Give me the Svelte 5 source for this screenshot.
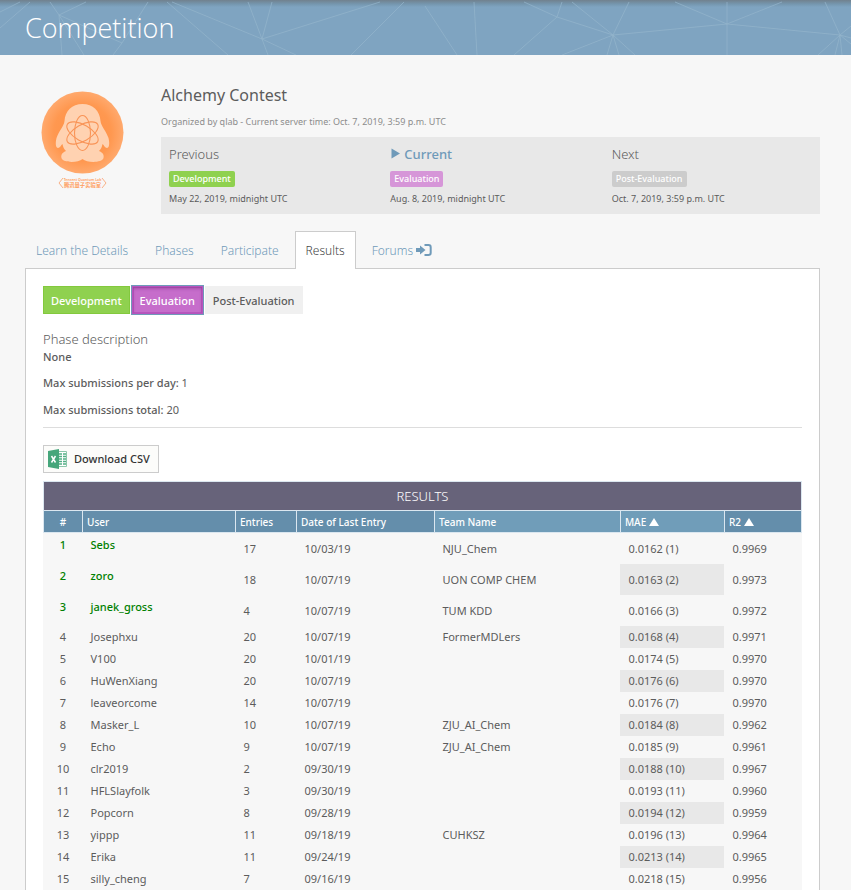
<script>
  const phases = [
    { heading: 'Previous', name: 'Development', date: 'May 22, 2019, midnight UTC', kind: 'dev' },
    { heading: 'Current', name: 'Evaluation', date: 'Aug. 8, 2019, midnight UTC', kind: 'eval' },
    { heading: 'Next', name: 'Post-Evaluation', date: 'Oct. 7, 2019, 3:59 p.m. UTC', kind: 'post' },
  ];
  const tabs = ['Learn the Details', 'Phases', 'Participate', 'Results', 'Forums'];
  const rows = [
    ['Sebs', 17, '10/03/19', 'NJU_Chem', '0.0162', '0.9969'],
    ['zoro', 18, '10/07/19', 'UON COMP CHEM', '0.0163', '0.9973'],
    ['janek_gross', 4, '10/07/19', 'TUM KDD', '0.0166', '0.9972'],
    ['Josephxu', 20, '10/07/19', 'FormerMDLers', '0.0168', '0.9971'],
    ['V100', 20, '10/01/19', '', '0.0174', '0.9970'],
    ['HuWenXiang', 20, '10/07/19', '', '0.0176', '0.9970'],
    ['leaveorcome', 14, '10/07/19', '', '0.0176', '0.9970'],
    ['Masker_L', 10, '10/07/19', 'ZJU_AI_Chem', '0.0184', '0.9962'],
    ['Echo', 9, '10/07/19', 'ZJU_AI_Chem', '0.0185', '0.9961'],
    ['clr2019', 2, '09/30/19', '', '0.0188', '0.9967'],
    ['HFLSlayfolk', 3, '09/30/19', '', '0.0193', '0.9960'],
    ['Popcorn', 8, '09/28/19', '', '0.0194', '0.9959'],
    ['yippp', 11, '09/18/19', 'CUHKSZ', '0.0196', '0.9964'],
    ['Erika', 11, '09/24/19', '', '0.0213', '0.9965'],
    ['silly_cheng', 7, '09/16/19', '', '0.0218', '0.9956'],
  ];
</script>

<header class="banner">
  <svg class="mesh" width="851" height="55" viewBox="0 0 851 55" aria-hidden="true">
    <path d="M0 12L20 2M0 28L30 2M50 2L59 15L86 2M59 15L62 55M59 15L84 55M59 15L122 43L148 2M122 43L113 55M167 2L228 55M172 2L262 39L248 2M262 39L272 2M262 39L380 2M262 39L268 55M262 39L296 55M404 2L351 55M425 6L457 55M474 2L477 55M514 55L557 17L562 2M557 17L524 2M557 17L613 35L572 2M613 35L629 2M613 35L562 55M613 35L607 55M613 35L619 55M613 35L635 55M613 35L727 24L675 2M727 24L727 2M727 24L782 2M727 24V55M727 24L840 35L825 2M840 35L851 26M840 35L818 55M840 35L835 55M840 35L842 55M840 35L851 44M840 35L851 38" />
  </svg>
  <h1>Competition</h1>
</header>

<main>
  <section class="contest">
    <svg class="logo" width="84" height="98" viewBox="11 11 84 98" role="img" aria-label="Tencent Quantum Lab">
      <defs>
        <radialGradient id="disc">
          <stop offset="0" stop-color="#ff8f45" />
          <stop offset="0.7" stop-color="#ff9850" />
          <stop offset="1" stop-color="#ffa96d" />
        </radialGradient>
      </defs>
      <circle cx="52.500" cy="52.500" r="41" fill="url(#disc)" />
      <path fill="#ffd2b1" d="M52.500 24C42 24 35 31 34.500 41C34 46 29 51 26.500 58C25 64 26 68 28 68C30 68 31 65 32.500 64C33 67 34 69 36 71C31 73 31 76 31.500 78C33 83 48 83 52.500 79C57 83 72 83 73.500 78C74 76 74 73 69 71C71 69 72 67 72.500 64C74 65 75 68 77 68C79 68 80 64 78.500 58C76 51 71 46 70.500 41C70 31 63 24 52.500 24Z" />
      <g fill="none" stroke="#f99457" stroke-width="1.100">
        <ellipse cx="52.500" cy="53" rx="8" ry="17.500" />
        <ellipse cx="52.500" cy="53" rx="8" ry="17.500" transform="rotate(60 52.500 53)" />
        <ellipse cx="52.500" cy="53" rx="8" ry="17.500" transform="rotate(120 52.500 53)" />
        <path stroke-width="0.700" d="M33 98L29 103L33 108M72 98L76 103L72 108" />
      </g>
      <text x="52.500" y="101" font-size="3.500" font-weight="600">Tencent Quantum Lab</text>
      <text x="52.500" y="107" font-size="5.300" font-weight="700">腾讯量子实验室</text>
    </svg>
    <div class="info">
      <h2>Alchemy Contest</h2>
      <p class="meta">Organized by qlab - Current server time: Oct. 7, 2019, 3:59 p.m. UTC</p>
      <div class="timeline">
        {#each phases as p}
          <div class="phase {p.kind}">
            <h3>{#if p.kind === 'eval'}<svg width="10" height="11" viewBox="0 0 10 11" aria-hidden="true"><path d="M1.500 0.500L10 5.500L1.500 10.500Z" fill="currentColor" /></svg>{/if}{p.heading}</h3>
            <span class="label">{p.name}</span>
            <p>{p.date}</p>
          </div>
        {/each}
      </div>
    </div>
  </section>

  <nav>
    {#each tabs as t}
      <a href="#{t}" class:active={t === 'Results'}>{t}{#if t === 'Forums'}<svg width="16" height="14" viewBox="0 0 16 14" aria-hidden="true"><path d="M0 4H4V1.500L9.500 6L4 10.500V8H0Z" fill="currentColor" /><path d="M8.500 1H12.500Q14.700 1 14.700 3.200V8.800Q14.700 11 12.500 11H8.500" fill="none" stroke="currentColor" stroke-width="2" /></svg>{/if}</a>
    {/each}
  </nav>

  <section class="panel">
    <div class="buttons">
      <button class="dev">Development</button>
      <button class="eval">Evaluation</button>
      <button class="post">Post-Evaluation</button>
    </div>
    <h3>Phase description</h3>
    <p class="desc">None</p>
    <p class="limit"><b>Max submissions per day:</b> 1</p>
    <p class="limit"><b>Max submissions total:</b> 20</p>
    <hr />
    <button class="csv">
      <svg width="20" height="20" viewBox="0 0 20 20" aria-hidden="true">
        <path d="M10 2.500H18.500V17.500H10" fill="#fff" stroke="#8cc7aa" />
        <path d="M11 5H14M15 5H18M11 7.500H14M15 7.500H18M11 10H14M15 10H18M11 12.500H14M15 12.500H18M11 15H14M15 15H18" stroke="#51ae84" stroke-width="1.300" />
        <path d="M0 2L11 0V20L0 18Z" fill="#46a67b" />
        <path d="M3.500 7L7.500 13.500M7.500 7L3.500 13.500" stroke="#fff" stroke-width="1.500" />
      </svg>
      Download CSV
    </button>

    <table>
      <colgroup><col class="c-rank" /><col class="c-user" /><col class="c-entries" /><col class="c-date" /><col /><col class="c-mae" /><col class="c-r2" /></colgroup>
      <thead>
        <tr class="title"><th colspan="7">RESULTS</th></tr>
        <tr class="cols">
          <th>#</th><th>User</th><th>Entries</th><th>Date of Last Entry</th><th class="light">Team Name</th>
          <th class="light">MAE <svg width="10" height="8" viewBox="0 0 10 8" aria-hidden="true"><path d="M5 0L10 8H0Z" fill="#fff" /></svg></th>
          <th>R2 <svg width="10" height="8" viewBox="0 0 10 8" aria-hidden="true"><path d="M5 0L10 8H0Z" fill="#fff" /></svg></th>
        </tr>
      </thead>
      <tbody>
        {#each rows as r, i}
          <tr class:top={i < 3}>
            <td>{i + 1}</td>
            <td>{r[0]}</td>
            <td>{r[1]}</td>
            <td>{r[2]}</td>
            <td>{r[3]}</td>
            <td class="mae">{r[4]} ({i + 1})</td>
            <td>{r[5]}</td>
          </tr>
        {/each}
      </tbody>
    </table>
  </section>
</main>

<style>
  :global(body) {
    margin: 0;
    background: #f7f7f7;
    color: #5c5c5c;
    font: 11px/18px 'Noto Sans', 'Open Sans', 'Noto Sans CJK SC', sans-serif;
  }
  h1, h2, h3, p { margin: 0; font-weight: 300; }
  p { font-weight: 400; }
  button { font: inherit; }
  .banner {
    position: relative;
    overflow: hidden;
    height: 55px;
    box-sizing: border-box;
    padding: 0 25px;
    background: linear-gradient(#71818e, #7596ae 4px, #7fa4c1 7px);
  }
  .mesh { position: absolute; left: 0; top: 0; }
  .mesh path { fill: none; stroke: #94b5cc; stroke-opacity: 0.7; }
  h1 { position: relative; color: #fff; font: 300 27px/56px 'Open Sans', sans-serif; }
  main { padding: 28px 31px 0 25px; }
  .contest { display: flex; gap: 36px; padding-left: 16px; }
  .logo { flex: none; margin-top: 8px; }
  .logo text {
    fill: #ff9d5c;
    text-anchor: middle;
    font-family: 'Noto Sans', 'Noto Sans CJK SC', sans-serif;
  }
  .info { flex: 1; }
  h2 { font-size: 16px; line-height: 24px; font-weight: 400; }
  .meta { margin: 6px 0; color: #8c8c8c; font-size: 9px; }
  .timeline { display: flex; height: 77px; box-sizing: border-box; padding: 8px 0 8px 8px; background: #e8e8e8; }
  .phase { flex: none; width: 34%; }
  .phase:last-child { flex: 1; }
  h3 { font-size: 13px; line-height: 18px; }
  .phase.eval h3 { color: #6f9ab9; font-weight: 500; }
  .phase h3 svg { margin-right: 4px; }
  .phase p { margin-top: 3px; font-size: 9px; }
  .label {
    display: table;
    margin-top: 8px;
    padding: 0 4px;
    border-radius: 2px;
    color: #fff;
    font-size: 9px;
    line-height: 16px;
    font-weight: 500;
  }
  .dev .label { background: #8fd14f; }
  .eval .label { background: #d696d8; }
  .post .label { background: #ccc; }
  nav { display: flex; height: 38px; margin-top: 17px; }
  nav a {
    display: flex;
    align-items: center;
    gap: 3px;
    height: 36px;
    padding: 1px 10px 0;
    margin-right: 5px;
    border: 1px solid transparent;
    border-bottom: 0;
    color: #6f9ab9;
    font-size: 12px;
    font-weight: 300;
    text-decoration: none;
    white-space: nowrap;
  }
  nav a.active { position: relative; z-index: 1; background: #fff; border-color: #ccc; color: #444; }
  .panel { margin-top: -1px; padding: 17px 17px 0; background: #fff; border: 1px solid #ccc; border-bottom: 0; }
  .buttons { display: flex; gap: 2px; margin-bottom: 16px; }
  .buttons button { height: 28px; padding: 1px 7px 0; border: 1px solid; font-weight: 500; }
  .buttons .dev { background: #8fd14f; border-color: #83c93d; color: #fff; }
  .buttons .eval {
    background: #c66dcb;
    border-color: #b654bd;
    color: #fff;
    outline: 1px solid #6f9ab9;
    box-shadow: inset 0 2px 3px rgb(90 20 100 / 0.3), inset 0 0 0 1px #b958bf;
  }
  .buttons .post { background: #f0f0f0; border-color: #f0f0f0; color: #5c5c5c; }
  .desc { font-weight: 500; }
  .limit { margin-top: 8px; }
  .limit + .limit { margin-top: 9px; }
  .limit b { font-weight: 500; }
  hr { margin: 8px 0 17px; border: 0; border-top: 1px solid #ddd; }
  .csv {
    display: flex;
    align-items: center;
    gap: 6px;
    height: 28px;
    padding: 0 8px 0 4px;
    margin-bottom: 8px;
    border: 1px solid #ccc;
    background: #fcfcfa;
    color: #333;
    font-weight: 500;
  }
  table { width: 100%; table-layout: fixed; border-collapse: collapse; background: #f7f7f7; }
  .c-rank { width: 39px; }
  .c-user { width: 153px; }
  .c-entries { width: 61px; }
  .c-date { width: 138px; }
  .c-mae { width: 104px; }
  .c-r2 { width: 77px; }
  th { box-sizing: border-box; border: 1px solid #dbe7f0; color: #fff; text-align: left; }
  .title th { height: 29px; padding: 0; background: #67637a; font-size: 13px; font-weight: 300; text-align: center; }
  .cols th { height: 22px; padding: 0 4px; background: #648eab; font-size: 10px; font-weight: 500; white-space: nowrap; }
  .cols th:first-child, td:first-child { text-align: center; }
  .cols th.light { background: #709db9; }
  td { height: 22px; box-sizing: border-box; padding: 0 8px; line-height: 18px; white-space: nowrap; }
  td:first-child { padding: 0; }
  .top td { height: 31px; padding-top: 2px; }
  .top td:nth-child(-n + 2) { padding-top: 0; padding-bottom: 6px; color: #008000; font-weight: 500; }
  tbody tr:nth-child(even) .mae { background: #e8e8e8; }
</style>
